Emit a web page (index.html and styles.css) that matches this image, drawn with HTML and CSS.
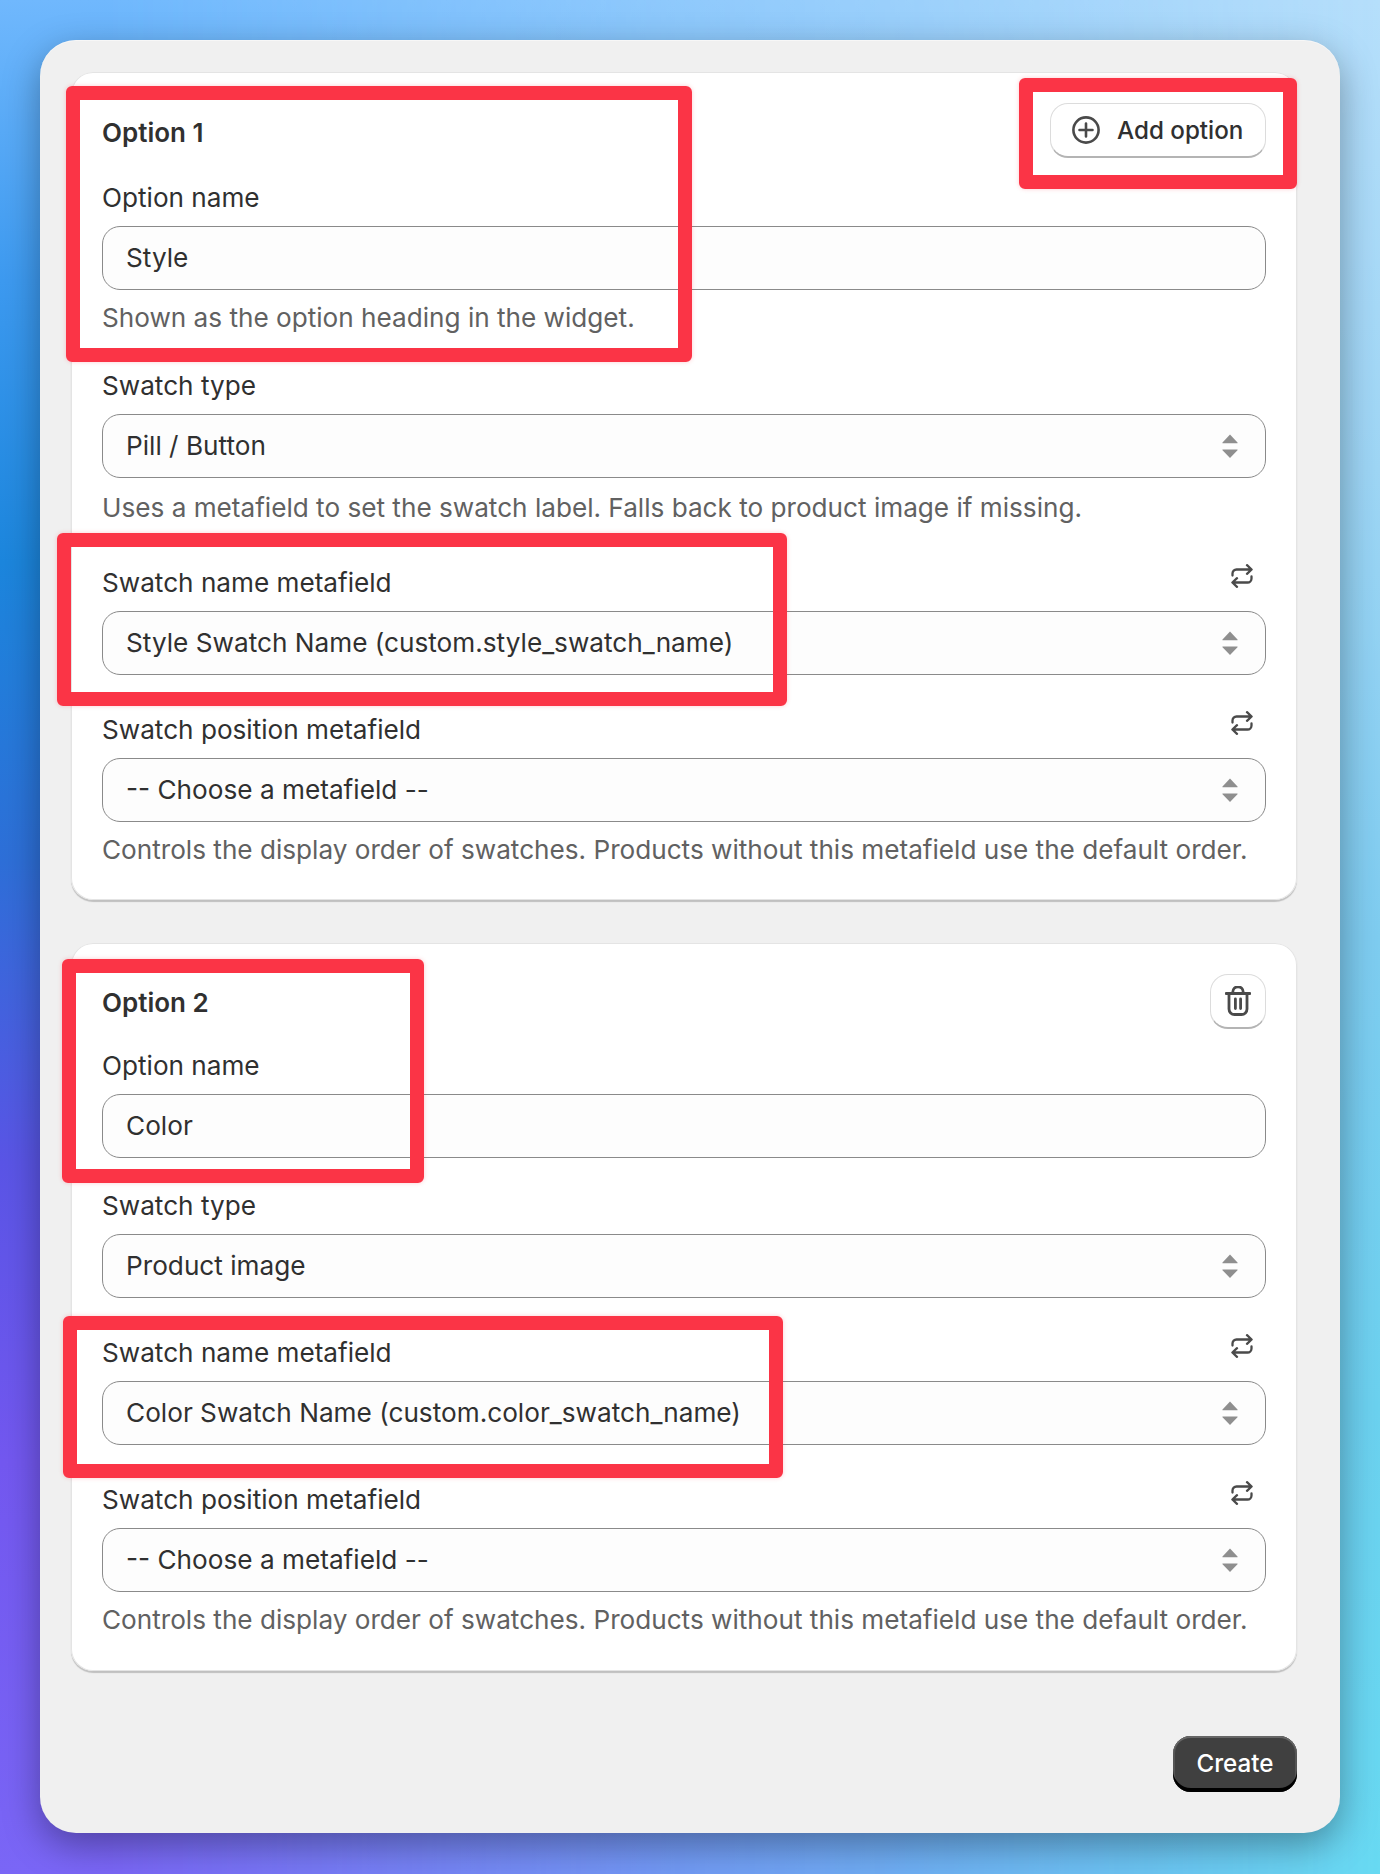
FILE: index.html
```html
<!DOCTYPE html>
<html lang="en">
<head>
<meta charset="utf-8">
<title>Options</title>
<link rel="stylesheet" href="styles.css">
</head>
<body>
<svg class="defs" width="0" height="0" aria-hidden="true">
  <symbol id="i-sort" viewBox="0 0 16 24"><path d="M8 .5 15.5 8.5a.4.4 0 0 1-.3.7H.8a.4.4 0 0 1-.3-.7z M.8 15.5h14.4a.4.4 0 0 1 .3.7L8 24 .5 16.2a.4.4 0 0 1 .3-.7z"/></symbol>
  <symbol id="i-repeat" viewBox="0 0 24 24"><path d="M2.5 11.5V9.5a4 4 0 0 1 4-4H21M17 1.2l4.6 4.3L17 9.8M21.5 12.5v2a4 4 0 0 1-4 4H3M7 14.2l-4.6 4.3L7 22.8"/></symbol>
</svg>
<div class="page">
  <main class="panel">
    <section class="card card-one">
      <header class="card-head">
        <h2 class="card-title">Option 1</h2>
        <button class="btn btn-add" type="button">
          <svg class="icon-plus" viewBox="0 0 28 28"><circle cx="14" cy="14" r="12.6"/><path d="M14 7.5v13M7.5 14h13"/></svg>
          <span>Add option</span>
        </button>
      </header>
      <div class="field mt-24">
        <div class="label-row"><label class="label">Option name</label></div>
        <div class="control"><span>Style</span></div>
        <p class="help">Shown as the option heading in the widget.</p>
      </div>
      <div class="field mt-36">
        <div class="label-row"><label class="label">Swatch type</label></div>
        <div class="control"><span>Pill / Button</span><svg class="sort"><use href="#i-sort"/></svg></div>
        <p class="help help-wide">Uses a metafield to set the swatch label. Falls back to product image if missing.</p>
      </div>
      <div class="field mt-43">
        <div class="label-row"><label class="label">Swatch name metafield</label><svg class="repeat"><use href="#i-repeat"/></svg></div>
        <div class="control"><span>Style Swatch Name (custom.style_swatch_name)</span><svg class="sort"><use href="#i-sort"/></svg></div>
      </div>
      <div class="field mt-39">
        <div class="label-row"><label class="label">Swatch position metafield</label><svg class="repeat"><use href="#i-repeat"/></svg></div>
        <div class="control"><span>-- Choose a metafield --</span><svg class="sort"><use href="#i-sort"/></svg></div>
        <p class="help">Controls the display order of swatches. Products without this metafield use the default order.</p>
      </div>
    </section>

    <section class="card card-two">
      <header class="card-head">
        <h2 class="card-title">Option 2</h2>
        <button class="btn btn-icon" type="button" aria-label="Delete">
          <svg class="icon-trash" viewBox="0 0 26 30"><path d="M1 7.5h24M7.8 7.5V6a5.2 5.2 0 0 1 10.4 0v1.5M4 7.5V23a5.5 5.5 0 0 0 5.5 5.5h7A5.5 5.5 0 0 0 22 23V7.5M10.4 13v9.5M15.6 13v9.5"/></svg>
        </button>
      </header>
      <div class="field mt-21">
        <div class="label-row"><label class="label">Option name</label></div>
        <div class="control"><span>Color</span></div>
      </div>
      <div class="field mt-32">
        <div class="label-row"><label class="label">Swatch type</label></div>
        <div class="control"><span>Product image</span><svg class="sort"><use href="#i-sort"/></svg></div>
      </div>
      <div class="field mt-39">
        <div class="label-row"><label class="label">Swatch name metafield</label><svg class="repeat"><use href="#i-repeat"/></svg></div>
        <div class="control"><span>Color Swatch Name (custom.color_swatch_name)</span><svg class="sort"><use href="#i-sort"/></svg></div>
      </div>
      <div class="field mt-39">
        <div class="label-row"><label class="label">Swatch position metafield</label><svg class="repeat"><use href="#i-repeat"/></svg></div>
        <div class="control"><span>-- Choose a metafield --</span><svg class="sort"><use href="#i-sort"/></svg></div>
        <p class="help">Controls the display order of swatches. Products without this metafield use the default order.</p>
      </div>
    </section>

    <footer class="actions">
      <button class="btn-primary" type="button">Create</button>
    </footer>
  </main>

  <div class="mark mark-1"></div>
  <div class="mark mark-2"></div>
  <div class="mark mark-3"></div>
  <div class="mark mark-4"></div>
  <div class="mark mark-5"></div>
</div>
</body>
</html>
```
FILE: styles.css
```css
* { box-sizing: border-box; }
html, body { margin: 0; padding: 0; }
body {
  width: 1380px;
  height: 1874px;
  overflow: hidden;
  font-family: Inter, "Liberation Sans", sans-serif;
  color: #303030;
}
.defs { position: absolute; }

.page {
  position: relative;
  width: 1380px;
  height: 1874px;
  padding: 40px 40px 41px;
  background: linear-gradient(to bottom, #b6dffb 0%, #9fd6f5 25%, #7fcdf0 50%, #6cd2ef 75%, #68daf2 100%);
  isolation: isolate;
}
.page::before {
  content: "";
  position: absolute;
  inset: 0;
  z-index: -1;
  background: linear-gradient(to bottom, #70b8fd 0%, #3d9af0 15%, #1c86dd 30%, #2e6fd8 46%, #5a55e6 62%, #7358f0 78%, #7a66f6 100%);
  -webkit-mask-image: linear-gradient(to right, #000 0%, #000 8%, transparent 100%);
  mask-image: linear-gradient(to right, #000 0%, #000 8%, transparent 100%);
}

.panel {
  height: 1793px;
  padding: 32px 43px 41px 31px;
  background: #f0f0f0;
  border-radius: 36px;
  box-shadow: 0 12px 36px rgba(0, 0, 0, .34), inset 0 1px 0 rgba(255, 255, 255, .45);
  display: flex;
  flex-direction: column;
}

.card {
  background: #fff;
  border-radius: 22px;
  padding: 31px 31px 0;
  box-shadow: 0 0 0 1px #e4e4e4 inset, 0 1.5px 1px rgba(0, 0, 0, .2);
}
.card-one { height: 828px; }
.card-two { height: 728px; margin-top: 43px; }

.card-head {
  height: 55px;
  display: flex;
  justify-content: space-between;
  align-items: center;
}
.card-title {
  margin: 5px 0 0;
  font-size: 26px;
  line-height: 32px;
  font-weight: 600;
  color: #303030;
}
.card-two .card-title { margin-top: 2px; }

.mt-21 { margin-top: 21px; }
.mt-24 { margin-top: 24px; }
.mt-32 { margin-top: 32px; }
.mt-36 { margin-top: 36px; }
.mt-39 { margin-top: 39px; }
.mt-43 { margin-top: 43px; }

.label-row {
  display: flex;
  justify-content: space-between;
  align-items: flex-start;
  height: 32px;
  margin-bottom: 12px;
}
.label {
  font-size: 26.15px;
  line-height: 32px;
  font-weight: 400;
  color: #303030;
}
.repeat {
  width: 24px;
  height: 24px;
  margin: -3px 12px 0 0;
  fill: none;
  stroke: #4a4a4a;
  stroke-width: 2.3;
  stroke-linecap: round;
  stroke-linejoin: round;
}

.control {
  height: 64px;
  padding: 0 27px 0 23px;
  display: flex;
  justify-content: space-between;
  align-items: center;
  background: #fdfdfd;
  border: 1.3px solid #8a8a8a;
  border-radius: 18px;
  font-size: 26.2px;
  line-height: 32px;
  font-weight: 400;
  color: #303030;
}
.sort {
  width: 16px;
  height: 24px;
  fill: #8f8f8f;
}

.help {
  margin: 12px 0 0;
  font-size: 26.15px;
  line-height: 32px;
  font-weight: 400;
  color: #616161;
}
.help-wide { margin-top: 14px; }

.btn {
  display: flex;
  align-items: center;
  background: #fff;
  border: 1.3px solid #dcdcdc;
  border-bottom: 2px solid #b4b4b4;
  border-radius: 18px;
  font-family: inherit;
  color: #303030;
  padding: 0;
}
.btn-add {
  width: 216px;
  height: 55px;
  padding-left: 21px;
  gap: 17px;
  font-size: 24.2px;
  font-weight: 500;
}
.icon-plus {
  width: 28px;
  height: 28px;
  fill: none;
  stroke: #4a4a4a;
  stroke-width: 2.6;
  stroke-linecap: round;
}
.btn-icon {
  width: 56px;
  height: 55px;
  justify-content: center;
}
.icon-trash {
  width: 26px;
  height: 30px;
  fill: none;
  stroke: #4a4a4a;
  stroke-width: 2.8;
  stroke-linecap: round;
  stroke-linejoin: round;
}

.actions {
  margin-top: auto;
  display: flex;
  justify-content: flex-end;
}
.btn-primary {
  width: 124px;
  height: 56px;
  padding: 0 0 2px;
  border: 0;
  border-radius: 18px;
  background: #404040;
  box-shadow: inset 0 2px 0 #666, inset 0 -4px 0 #000, inset 2px 0 0 #555, inset -2px 0 0 #555;
  font-family: inherit;
  font-size: 24.2px;
  font-weight: 500;
  color: #fff;
}

.mark {
  position: absolute;
  border: 14px solid #fb3446;
  border-radius: 6px;
  box-shadow: 0 0 4px rgba(251, 52, 70, .25);
}
.mark-1 { left: 66px; top: 86px; width: 626px; height: 276px; }
.mark-2 { left: 1019px; top: 78px; width: 278px; height: 111px; }
.mark-3 { left: 57px; top: 533px; width: 730px; height: 173px; }
.mark-4 { left: 62px; top: 959px; width: 362px; height: 224px; }
.mark-5 { left: 63px; top: 1316px; width: 720px; height: 162px; }
```
